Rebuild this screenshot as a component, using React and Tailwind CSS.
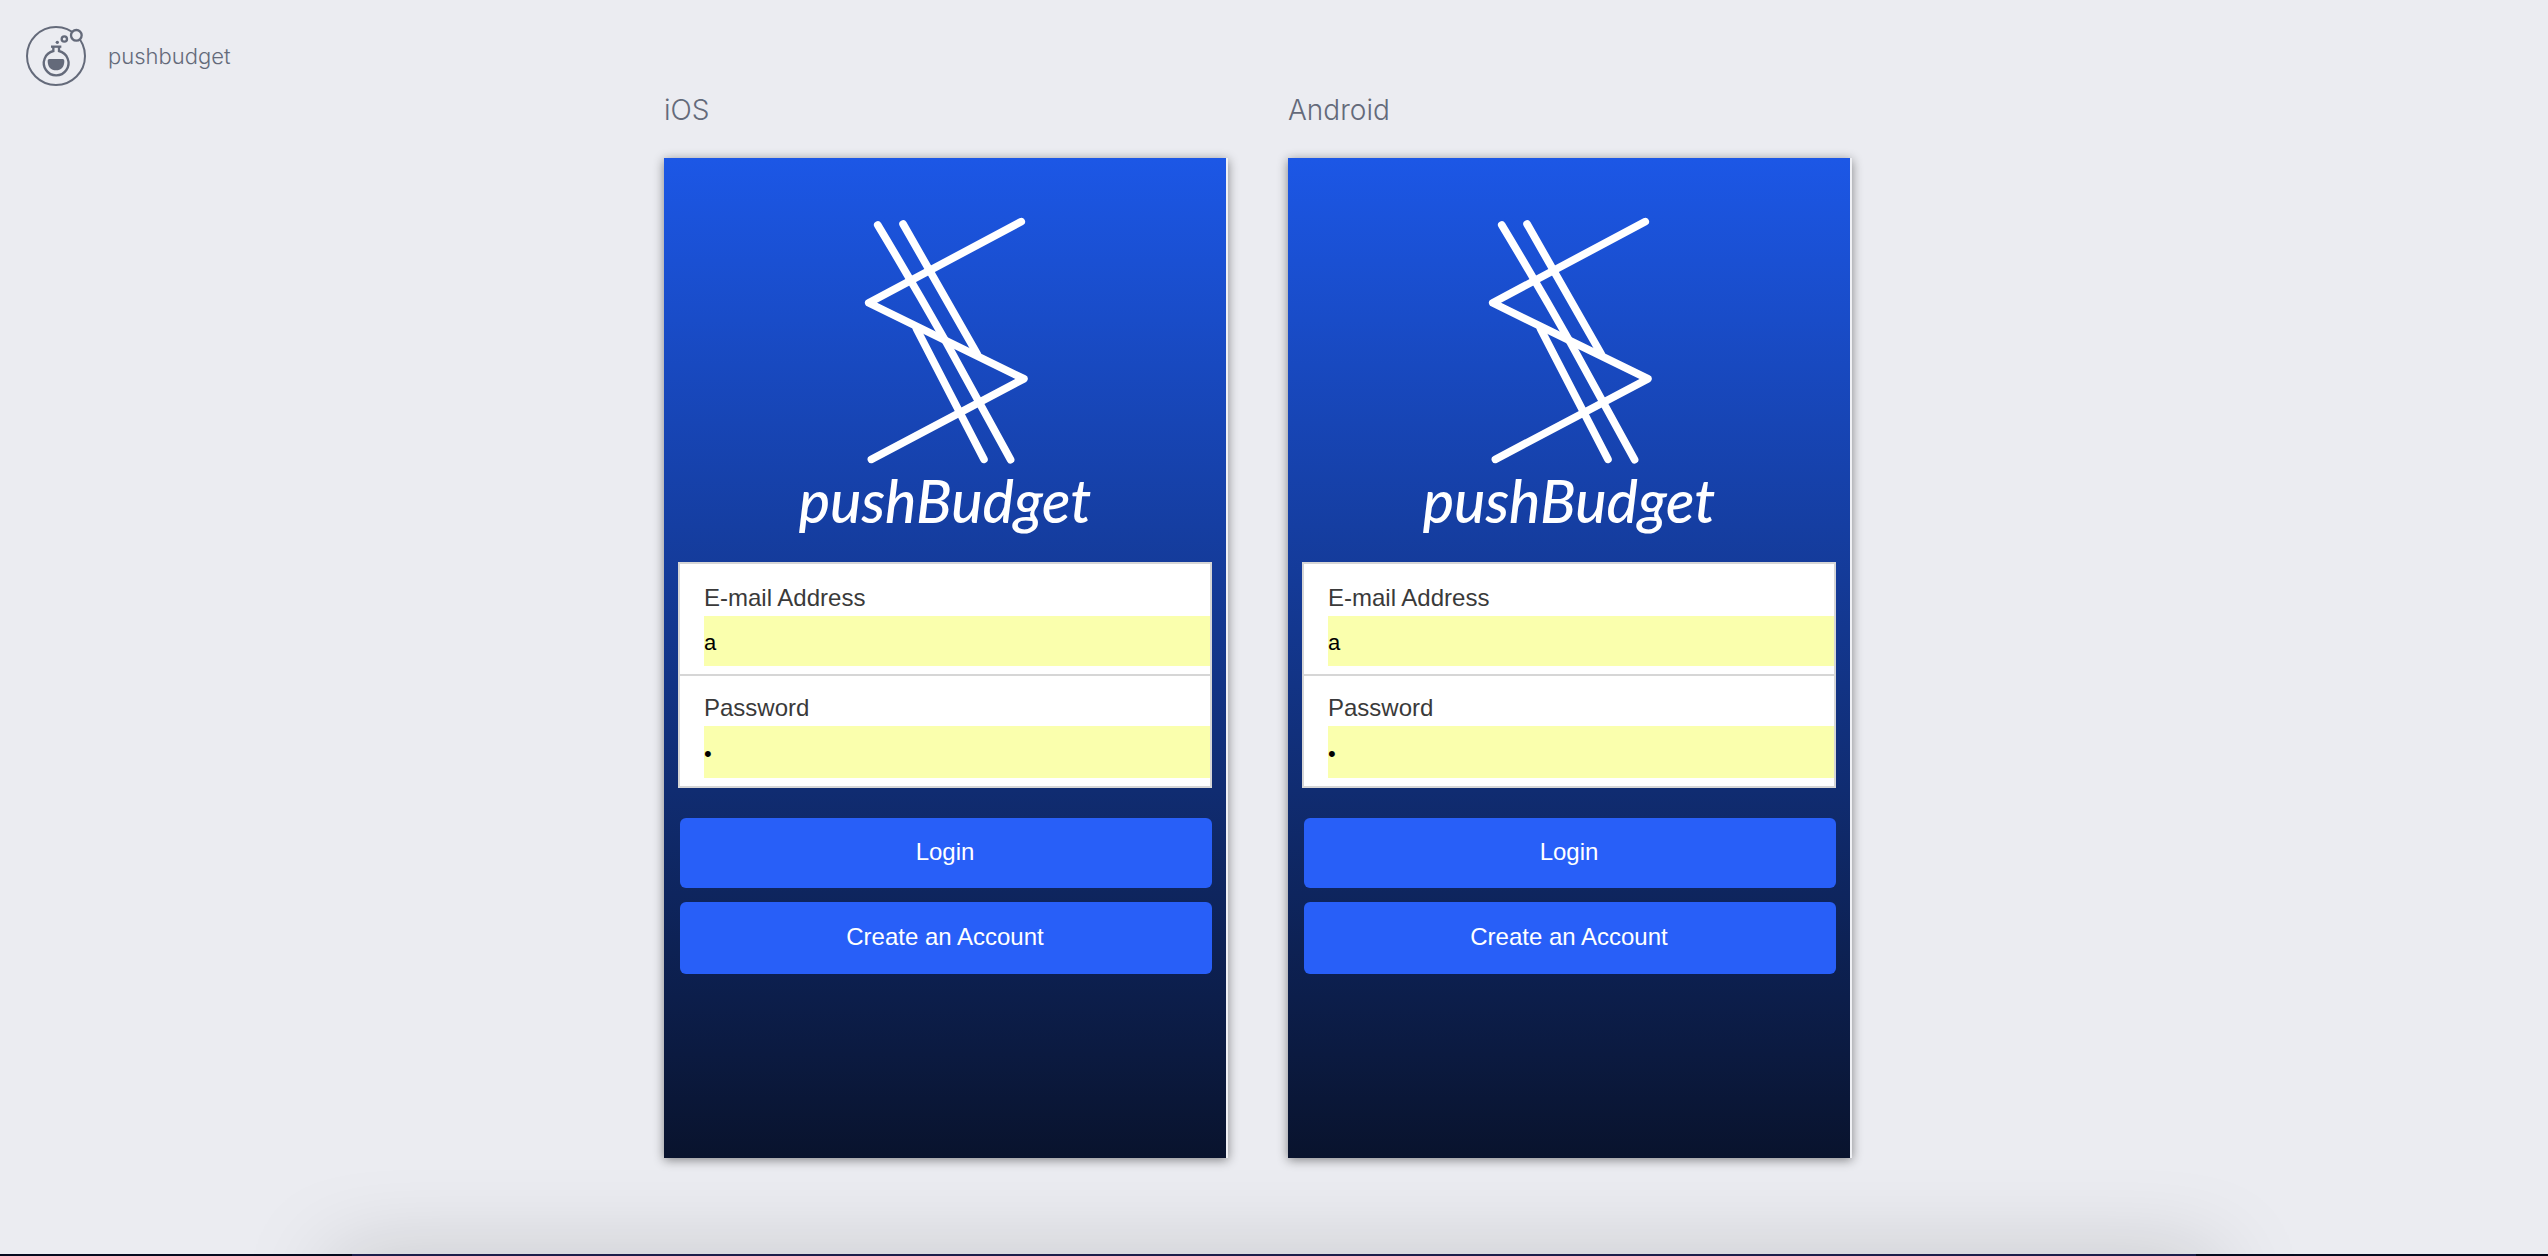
import React from "react";

function BrandIcon() {
  return (
    <svg viewBox="0 0 180 180" className="size-15 shrink-0" fill="none" stroke="#646a7a" aria-hidden="true">
      <circle cx="90" cy="90" r="87" strokeWidth="6" />
      <circle cx="151" cy="28" r="16" strokeWidth="7" fill="#ebecf1" />
      <circle cx="115" cy="39" r="8" strokeWidth="7" />
      <circle cx="94" cy="49" r="5" fill="#646a7a" stroke="none" />
      <path strokeWidth="7" d="M75 62 H106" />
      <path strokeWidth="7" d="M82 62 V75 A37 37 0 1 0 99 75 V62" />
      <path fill="#646a7a" stroke="none" d="M65 104 Q65 99 70 99 H110 Q115 99 115 104 C115 124 105 133 90 133 C75 133 65 124 65 104 Z" />
    </svg>
  );
}

function PushLogo() {
  return (
    <svg viewBox="240 80 510 745" className="h-[248px] w-[170px]" fill="none" stroke="white" strokeWidth="23" strokeLinecap="round" strokeLinejoin="round" aria-hidden="true">
      <path d="M724 94 L266 338 L732 566 L274 808" />
      <path d="M293 104 Q400 282 498 455 L692 809" />
      <path d="M369 101 L592 492" />
      <path d="M409 415 L612 808" />
    </svg>
  );
}

function Field({ id, label, type, value, className, inputClassName }) {
  return (
    <div className={className}>
      <label htmlFor={id} className="block text-2xl leading-8 text-[#3a3a3a]">
        {label}
      </label>
      <input
        id={id}
        type={type}
        defaultValue={value}
        className={"block w-full bg-[#faffad] pt-1 text-[22px] text-black outline-none " + inputClassName}
      />
    </div>
  );
}

function Device({ name }) {
  return (
    <section className="flex w-[564px] flex-col">
      <h2 className="mb-7 text-[28px] leading-10 font-light text-[#646a7a] font-['Inter',sans-serif]">{name}</h2>
      <div className="bg-[#eff0f4] pr-0.5 shadow-[0_2px_10px_rgba(0,0,0,0.45)]">
        <form
          className="flex min-h-[1000px] flex-col bg-linear-to-b/srgb from-[#1c57e6] to-[#09132d] px-3.5 pt-[59px]"
          onSubmit={(e) => e.preventDefault()}
        >
          <div className="flex flex-col items-center">
            <PushLogo />
            <h1 className="text-[59px] leading-[72px] font-medium text-white italic font-['Lato',sans-serif]">pushBudget</h1>
          </div>
          <div className="mt-[25px] flex flex-col border-2 border-[#d6d6d6] bg-white">
            <Field id={name + "-email"} label="E-mail Address" type="text" value="a" className="border-b-2 border-[#d6d6d6] pt-[18px] pb-2 pl-6" inputClassName="mt-[2px] h-[50px]" />
            <Field id={name + "-password"} label="Password" type="password" value="a" className="pt-4 pb-2 pl-6" inputClassName="mt-[2px] h-[52px]" />
          </div>
          <div className="mt-[30px] ml-0.5 flex flex-col gap-3.5">
            <button type="submit" className="h-[70px] rounded-md bg-[#285ff8] pr-0.5 pb-0.5 text-2xl text-white">Login</button>
            <button type="button" className="h-[72px] rounded-md bg-[#285ff8] pr-0.5 pb-0.5 text-2xl text-white">Create an Account</button>
          </div>
        </form>
      </div>
    </section>
  );
}

export default function App() {
  return (
    <div className="relative flex min-h-screen flex-col overflow-hidden bg-[#ebecf1] font-['Liberation_Sans',Arial,sans-serif]">
      <header className="flex h-[90px] items-end pl-[26px]">
        <div className="flex items-center gap-[22px] pb-1">
          <BrandIcon />
          <span className="text-[22px] font-light text-[#646a7a] font-['Inter',sans-serif]">pushbudget</span>
        </div>
      </header>
      <main className="flex justify-center gap-[60px] pr-8">
        <Device name="iOS" />
        <Device name="Android" />
      </main>
      <div className="absolute inset-x-0 bottom-0 h-0.5 bg-[#050a1e]">
        <div className="mx-[352px] h-0.5 bg-[#1c1e4a] shadow-[0_30px_90px_20px_rgba(0,0,0,0.26)]" />
      </div>
    </div>
  );
}
